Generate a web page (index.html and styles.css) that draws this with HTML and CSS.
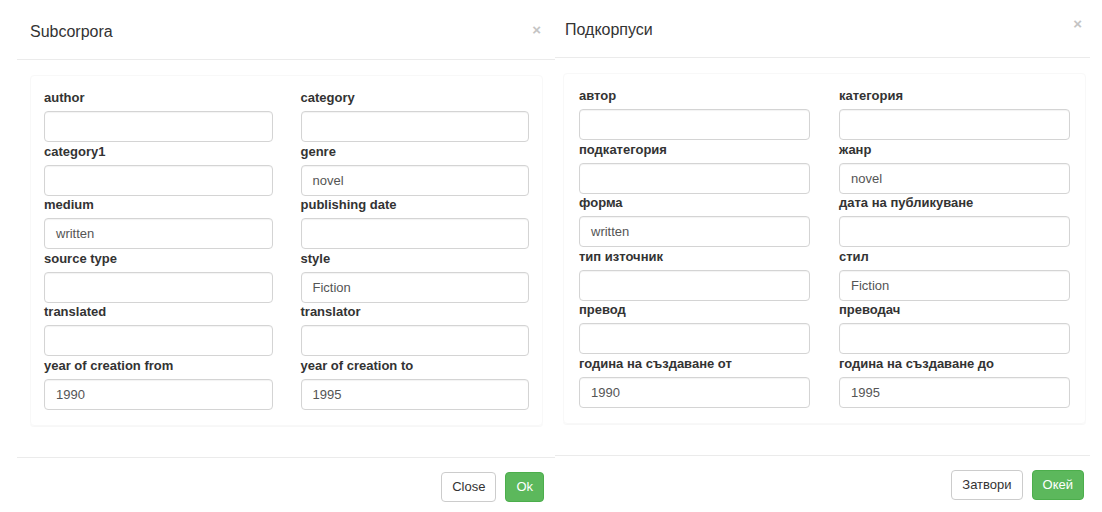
FILE: index.html
```html
<!DOCTYPE html>
<html lang="en">
<head>
<meta charset="utf-8">
<title>Subcorpora</title>
<link rel="stylesheet" href="styles.css">
</head>
<body>
<div class="page">
  <section class="modal modal-en">
    <header class="modal-header">
      <h4 class="modal-title">Subcorpora</h4>
      <span class="close">×</span>
    </header>
    <div class="modal-body">
      <div class="panel">
        <div class="grid">
          <div class="group"><label class="lbl">author</label><div class="input"></div></div>
          <div class="group"><label class="lbl">category</label><div class="input"></div></div>
          <div class="group"><label class="lbl">category1</label><div class="input"></div></div>
          <div class="group"><label class="lbl">genre</label><div class="input">novel</div></div>
          <div class="group"><label class="lbl">medium</label><div class="input">written</div></div>
          <div class="group"><label class="lbl">publishing date</label><div class="input"></div></div>
          <div class="group"><label class="lbl">source type</label><div class="input"></div></div>
          <div class="group"><label class="lbl">style</label><div class="input">Fiction</div></div>
          <div class="group"><label class="lbl">translated</label><div class="input"></div></div>
          <div class="group"><label class="lbl">translator</label><div class="input"></div></div>
          <div class="group"><label class="lbl">year of creation from</label><div class="input">1990</div></div>
          <div class="group"><label class="lbl">year of creation to</label><div class="input">1995</div></div>
        </div>
      </div>
    </div>
    <footer class="modal-footer">
      <button class="btn btn-default">Close</button>
      <button class="btn btn-success">Ok</button>
    </footer>
  </section>

  <section class="modal modal-bg">
    <header class="modal-header">
      <h4 class="modal-title">Подкорпуси</h4>
      <span class="close">×</span>
    </header>
    <div class="modal-body">
      <div class="panel">
        <div class="grid">
          <div class="group"><label class="lbl">автор</label><div class="input"></div></div>
          <div class="group"><label class="lbl">категория</label><div class="input"></div></div>
          <div class="group"><label class="lbl">подкатегория</label><div class="input"></div></div>
          <div class="group"><label class="lbl">жанр</label><div class="input">novel</div></div>
          <div class="group"><label class="lbl">форма</label><div class="input">written</div></div>
          <div class="group"><label class="lbl">дата на публикуване</label><div class="input"></div></div>
          <div class="group"><label class="lbl">тип източник</label><div class="input"></div></div>
          <div class="group"><label class="lbl">стил</label><div class="input">Fiction</div></div>
          <div class="group"><label class="lbl">превод</label><div class="input"></div></div>
          <div class="group"><label class="lbl">преводач</label><div class="input"></div></div>
          <div class="group"><label class="lbl">година на създаване от</label><div class="input">1990</div></div>
          <div class="group"><label class="lbl">година на създаване до</label><div class="input">1995</div></div>
        </div>
      </div>
    </div>
    <footer class="modal-footer">
      <button class="btn btn-default">Затвори</button>
      <button class="btn btn-success">Окей</button>
    </footer>
  </section>
</div>
</body>
</html>
```

FILE: styles.css
```css
* { box-sizing: border-box; }

html, body {
  margin: 0;
  padding: 0;
  background: #ffffff;
  overflow: hidden;
}

body {
  font-family: "Liberation Sans", Arial, Helvetica, sans-serif;
  color: #333333;
  width: 1102px;
  height: 512px;
}

.page {
  display: flex;
  align-items: flex-start;
}

.modal {
  display: flex;
  flex-direction: column;
  background: #ffffff;
}

.modal-en {
  margin-left: 17px;
  width: 538px;
  margin-top: 3px;
}

.modal-bg {
  width: 535px;
  margin-top: 1px;
}

.modal-header {
  display: flex;
  align-items: flex-start;
  justify-content: space-between;
  padding: 16px 14px 14px 13px;
  border-bottom: 1px solid #ebebeb;
}

.modal-bg .modal-header {
  padding-left: 10px;
  padding-right: 8px;
}

.modal-title {
  margin: 0;
  font-size: 16px;
  font-weight: normal;
  line-height: 26px;
  color: #333333;
}

.close {
  font-size: 15px;
  font-weight: bold;
  line-height: 26px;
  color: #c4c4c4;
  margin-top: -2px;
}

.modal-bg .close {
  margin-top: -6px;
}

.modal-body {
  padding: 15px 12px 15px 13px;
}

.modal-bg .modal-body {
  padding-left: 8px;
  padding-right: 4px;
}

.panel {
  border: 1px solid #f8f8f8;
  border-radius: 4px;
  box-shadow: 0 1px 1px rgba(0, 0, 0, 0.035);
  padding: 14px 13px 13px 13px;
  margin-bottom: 16px;
}

.modal-bg .panel {
  padding-left: 15px;
  padding-right: 15px;
}

.grid {
  display: grid;
  grid-template-columns: 1fr 1fr;
  column-gap: 28px;
}

.modal-bg .grid {
  column-gap: 29px;
}

.group {
  display: flex;
  flex-direction: column;
  margin-bottom: 1.6px;
}

.lbl {
  font-size: 13px;
  font-weight: bold;
  line-height: 15px;
  color: #333333;
  margin-bottom: 6px;
}

.input {
  height: 31px;
  border: 1px solid #d4d4d4;
  border-radius: 4px;
  box-shadow: inset 0 1px 1px rgba(0, 0, 0, 0.05);
  padding: 0 11px;
  font-size: 13px;
  line-height: 29px;
  color: #555555;
}

.modal-footer {
  display: flex;
  justify-content: flex-end;
  gap: 9px;
  padding: 14px 11px 15px 10px;
  border-top: 1px solid #ebebeb;
}

.modal-bg .modal-footer {
  padding-right: 6px;
}

.btn {
  font-family: "Liberation Sans", Arial, Helvetica, sans-serif;
  font-size: 13px;
  line-height: 16px;
  height: 30px;
  padding: 6px 10px;
  border-radius: 4px;
  border: 1px solid #cccccc;
  background: #ffffff;
  color: #333333;
}

.btn-success {
  background: #5cb85c;
  border-color: #4cae4c;
  color: #ffffff;
}
```
